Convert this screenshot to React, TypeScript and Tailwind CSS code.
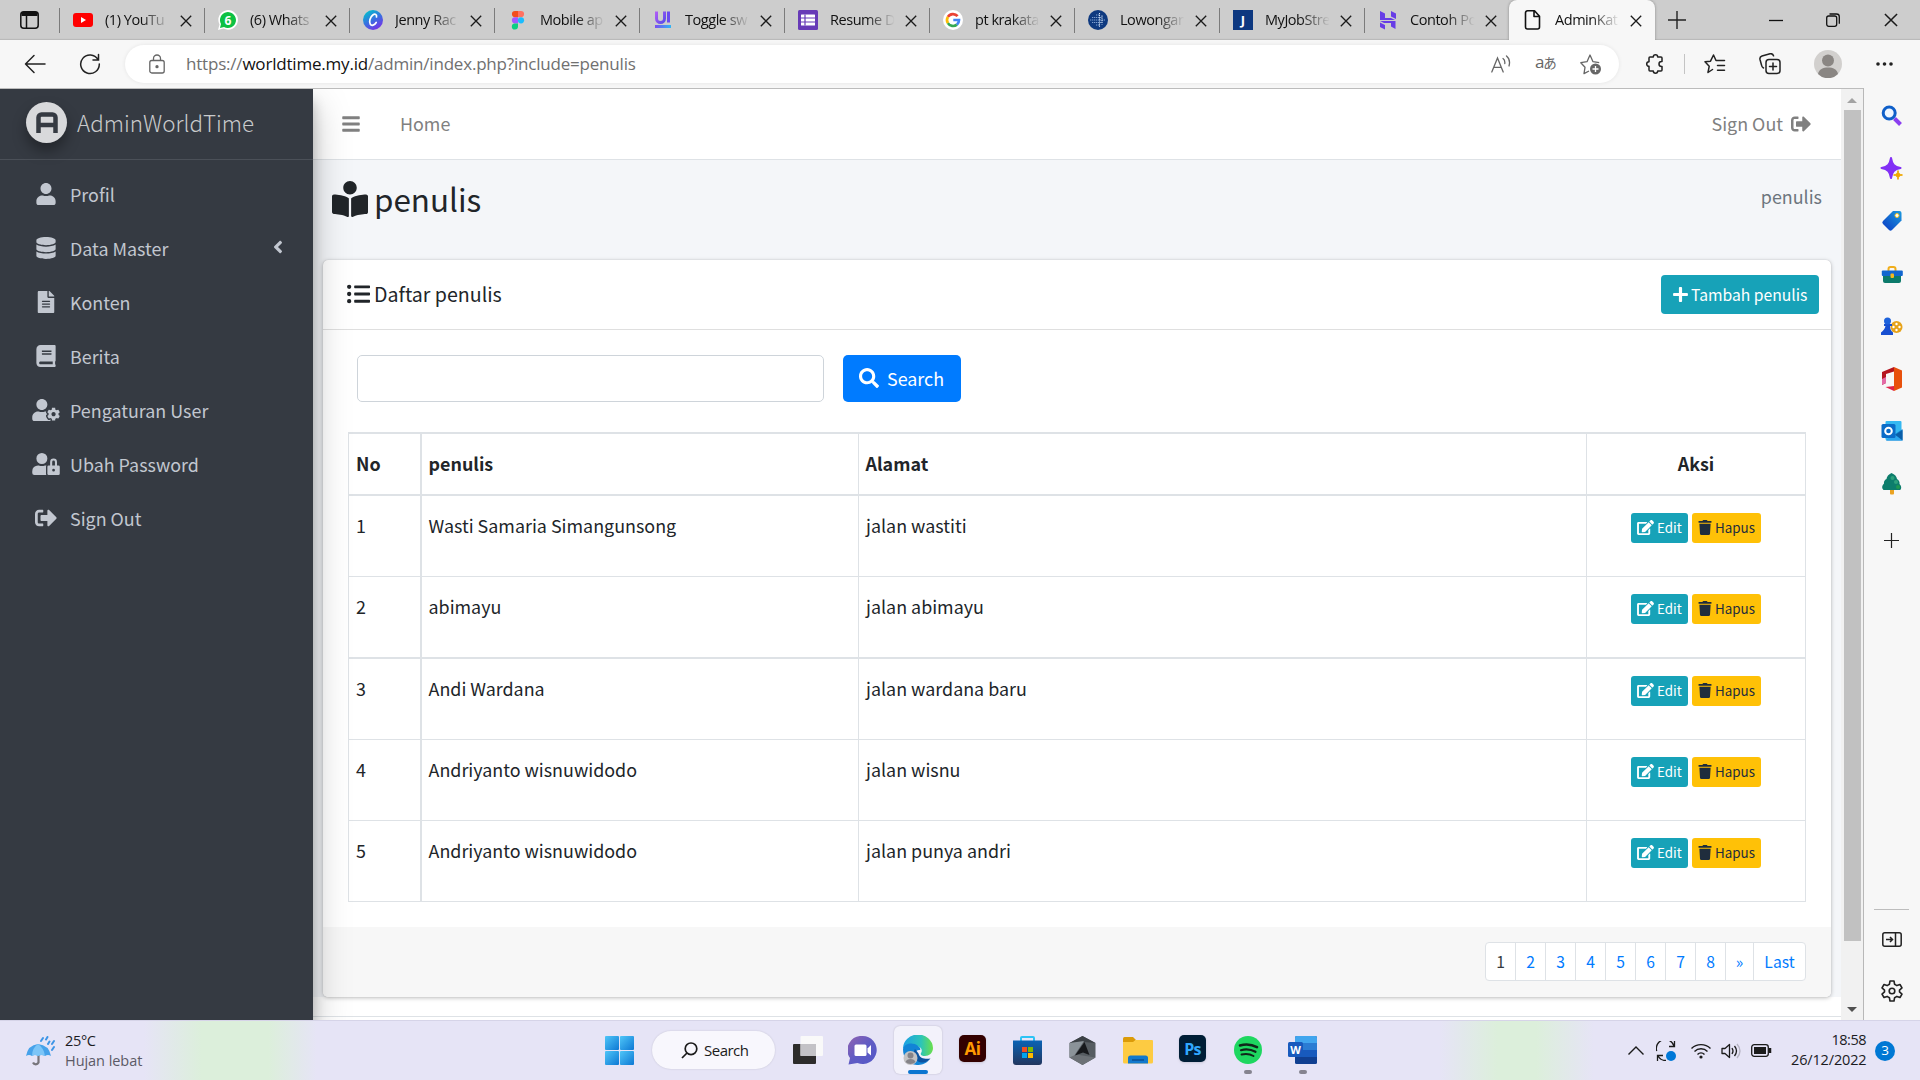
import React from "react";
import {
  FaUser, FaDatabase, FaFileAlt, FaBook, FaUserCog, FaUserLock, FaSignOutAlt, FaAngleLeft,
  FaBookReader, FaListUl, FaPlus, FaSearch, FaEdit, FaTrash, FaBars,
} from "react-icons/fa";

const segoe = "font-['Open_Sans',sans-serif]";
const source = "font-['Noto_Sans_CJK_SC',sans-serif]";

/* ---------- favicons ---------- */
const YouTube = () => (
  <svg viewBox="0 0 20 20" className="size-5"><rect y="3" width="20" height="14" rx="3" fill="#f00" /><path d="M8 7v6l5-3z" fill="#fff" /></svg>
);
const WhatsApp = () => (
  <svg viewBox="0 0 20 20" className="size-5">
    <path d="M0 20l1.5-5.5A9.8 9.8 0 1 1 5.500 18.500z" fill="#fff" />
    <path d="M2 18l1-4a8 8 0 1 1 3 3z" fill="#0dc143" />
    <text x="10" y="14.500" textAnchor="middle" fontSize="12" fontWeight="700" fill="#fff" fontFamily="Open Sans">6</text>
  </svg>
);
const Canva = () => (
  <svg viewBox="0 0 20 20" className="size-5">
    <defs><linearGradient id="canva" x1="0.200" y1="0" x2="0.800" y2="1"><stop offset="0" stopColor="#00c4cc" /><stop offset=".5" stopColor="#3a6fe0" /><stop offset="1" stopColor="#7d2ae8" /></linearGradient></defs>
    <circle cx="10" cy="10" r="10" fill="url(#canva)" />
    <path d="M13.500 7c.6-2.600-1.500-3.600-3.700-2C7 7 5.800 12 7.300 14.300c1.200 1.800 4.200 1 5.900-1.800" fill="none" stroke="#fff" strokeWidth="1.700" strokeLinecap="round" />
  </svg>
);
const Figma = () => (
  <svg viewBox="0 0 20 20" className="size-5">
    <path d="M10 1H7a3.100 3.100 0 0 0 0 6.200h3z" fill="#f24e1e" /><path d="M10 1h3a3.100 3.100 0 0 1 0 6.200h-3z" fill="#ff7262" />
    <path d="M10 7.200H7a3.100 3.100 0 0 0 0 6.200h3z" fill="#a259ff" /><circle cx="13" cy="10.300" r="3.100" fill="#1abcfe" />
    <path d="M10 13.400H7a3.100 3.100 0 1 0 3 3.200z" fill="#0acf83" />
  </svg>
);
const Uiverse = () => (
  <svg viewBox="0 0 20 20" className="size-5">
    <defs><linearGradient id="uiv" x1="0" x2="1" y1="0" y2="1"><stop offset="0" stopColor="#b05cf5" /><stop offset="1" stopColor="#5b4bea" /></linearGradient>
      <linearGradient id="uiv2"><stop offset="0" stopColor="#7b4df0" /><stop offset="1" stopColor="#2fb6f5" /></linearGradient></defs>
    <path d="M3.500 1.500v7a4 4 0 0 0 8 0v-7" fill="none" stroke="url(#uiv)" strokeWidth="3" />
    <rect x="14" y="1.500" width="3" height="11" fill="#6a4af0" /><rect x="2" y="15" width="16" height="3" fill="url(#uiv2)" />
  </svg>
);
const Forms = () => (
  <svg viewBox="0 0 20 20" className="size-5"><rect width="20" height="20" rx="1.500" fill="#673ab7" /><rect x="3" y="4.500" width="14" height="11" rx=".5" fill="#fff" />
    <path d="M3 8h14M3 12h14M7 4.500v11" stroke="#673ab7" strokeWidth="1.200" /></svg>
);
const Google = () => (
  <svg viewBox="0 0 20 20" className="size-5"><circle cx="10" cy="10" r="10" fill="#fff" />
    <g fill="none" strokeWidth="2.700">
      <path d="M14.600 6.200A6 6 0 0 0 4.900 6.900" stroke="#ea4335" /><path d="M4.900 6.900a6 6 0 0 0 0 6.200" stroke="#fbbc05" />
      <path d="M4.900 13.100a6 6 0 0 0 9 1.500" stroke="#34a853" /><path d="M13.900 14.600A6 6 0 0 0 16 10h-5.700" stroke="#4285f4" />
    </g></svg>
);
const Dots = () => (
  <svg viewBox="0 0 20 20" className="size-5"><circle cx="10" cy="10" r="10" fill="#0f3a80" />
    <path d="M2 10h15M4 7.500h10M4 12.500h10M8 5h4M8 15h4" stroke="#7f9fd0" strokeWidth="1.100" strokeDasharray="1.300 .7" />
    <path d="M11.500 3v14M14 5.500v9" stroke="#dbe8fa" strokeWidth="1.100" strokeDasharray="1.200 .9" /></svg>
);
const JobStreet = () => (
  <svg viewBox="0 0 20 20" className="size-5"><rect width="20" height="20" fill="#0d3880" />
    <text x="10" y="15" textAnchor="middle" fontSize="13" fontWeight="700" fill="#fff" fontFamily="Open Sans">J</text></svg>
);
const Hostinger = () => (
  <svg viewBox="0 0 20 20" className="size-5" fill="#673de6"><path d="M2 1l5 2.500V8h6l4 2H2zM13 1l5 2.500V9l-5-2.500zM2 11h15.500v8L13 16.500V13H6L2 11zM2 12.500L7 15v4.500L2 17z" /></svg>
);
const Doc = () => (
  <svg viewBox="0 0 20 20" className="size-5" fill="none" stroke="#111" strokeWidth="1.600" strokeLinejoin="round"><path d="M4.500.8h7l5 5.500V17a2 2 0 0 1-2 2h-10a2 2 0 0 1-2-2V2.800a2 2 0 0 1 2-2zM11 1v5.500h5.200" /></svg>
);

const tabs: [React.FC, string][] = [
  [YouTube, "(1) YouTu"], [WhatsApp, "(6) Whats"], [Canva, "Jenny Rac"], [Figma, "Mobile ap"],
  [Uiverse, "Toggle sw"], [Forms, "Resume D"], [Google, "pt krakata"], [Dots, "Lowongar"],
  [JobStreet, "MyJobStre"], [Hostinger, "Contoh Po"],
];

const Cross = ({ c = "size-3" }: { c?: string }) => (
  <svg viewBox="0 0 12 12" className={c + " shrink-0"} stroke="#1a1a1a" strokeWidth="1.300"><path d="M.8.8l10.400 10.400M11.200.8L.8 11.200" /></svg>
);

function Tab({ Icon, label, active }: { Icon: React.FC; label: string; active?: boolean }) {
  return (
    <div className={active ? "flex h-10 w-[146px] shrink-0 items-center rounded-t-lg bg-[#f7f7f7] pl-[14px] shadow-[0_0_3px_rgba(0,0,0,0.35)]" : "flex h-10 w-[145px] shrink-0 items-center"}>
      {!active && <div className="mr-[13px] h-[25px] w-px bg-[#7b7b7b]" />}
      <Icon />
      <span className="ml-3 w-[66px] overflow-hidden text-[14.500px] tracking-[-0.450px] whitespace-nowrap text-[#111] [mask-image:linear-gradient(90deg,#000_55%,transparent_98%)]">{label}</span>
      <span className="ml-[9px] pt-px"><Cross /></span>
    </div>
  );
}

function TabStrip() {
  return (
    <div className="flex h-10 items-center overflow-hidden bg-[#cdcdcd] shadow-[inset_0_-2px_1px_-1px_#b9b9b9]">
      <div className="flex w-[59px] shrink-0 pl-[20px]">
        <svg viewBox="0 0 19 18" className="h-[18px] w-[19px]" fill="none" stroke="#111" strokeWidth="1.500"><rect x=".8" y=".8" width="17.400" height="16.400" rx="3" /><path d="M1.500 3h16" strokeWidth="4" /><path d="M6.500 5v12" /></svg>
      </div>
      {tabs.map(([Icon, label]) => <Tab key={label} Icon={Icon} label={label} />)}
      <Tab Icon={Doc} label="AdminKat" active />
      <svg viewBox="0 0 18 18" className="ml-[13px] size-[18px] shrink-0" stroke="#222" strokeWidth="1.400"><path d="M9 0v18M0 9h18" /></svg>
      <svg viewBox="0 0 14 14" className="ml-[83px] size-[14px] shrink-0" stroke="#111" strokeWidth="1.300"><path d="M0 7.500h14" /></svg>
      <svg viewBox="0 0 14 14" className="ml-[43px] size-[14px] shrink-0" fill="none" stroke="#111" strokeWidth="1.300"><rect x=".7" y="3" width="10" height="10.300" rx="2" /><path d="M3.500 1h7A2.800 2.800 0 0 1 13.300 3.800v7" /></svg>
      <span className="ml-[44px]"><Cross c="size-[14px]" /></span>
    </div>
  );
}

function Toolbar() {
  return (
    <div className="flex h-12 items-center bg-[#f7f7f7]">
      <svg viewBox="0 0 22 20" className="ml-6 h-5 w-[22px]" fill="none" stroke="#222" strokeWidth="1.500" strokeLinecap="round" strokeLinejoin="round"><path d="M21 10H1.500M10 1.500L1.500 10l8.500 8.500" /></svg>
      <svg viewBox="0 0 22 22" className="ml-[33px] size-[22px]" fill="none" stroke="#222" strokeWidth="1.500" strokeLinecap="round"><path d="M19 6.500A9.300 9.300 0 1 0 20.300 11M19.500 1.500v5.500h-5.500" /></svg>
      <div className="ml-6 flex h-[38px] w-[1494px] items-center rounded-full bg-white shadow-[0_0_4px_rgba(0,0,0,0.08)]">
        <svg viewBox="0 0 16 20" className="ml-6 h-5 w-4" fill="none" stroke="#666" strokeWidth="1.300"><rect x=".8" y="6.500" width="14.400" height="12.500" rx="2" /><path d="M4.500 6.500V4.500a3.500 3.500 0 0 1 7 0v2" /><circle cx="8" cy="12.700" r="1" fill="#666" /></svg>
        <span className="ml-[21px] w-[1305px] text-[17px] tracking-[-0.200px] whitespace-nowrap text-[#707070]">https://<span className="text-[#111]">worldtime.my.id</span>/admin/index.php?include=penulis</span>
        <svg viewBox="0 0 20 19" className="h-[19px] w-5 shrink-0" fill="none" stroke="#666" strokeWidth="1.300" strokeLinecap="round"><path d="M.8 17L6.500 3 12.200 17M2.800 12.300h7.400M12 3.500c1.500 1 2 3 1.800 5M15.500 1c3 2.500 3.500 6.500 2.500 10" /></svg>
        <span className="ml-[24px] w-[22px] shrink-0 pb-1 text-[17px] leading-5 tracking-[-1.200px] whitespace-nowrap text-[#666]">a<span className="font-['Noto_Sans_CJK_JP',sans-serif] text-[13.500px]">あ</span></span>
        <svg viewBox="0 0 22 22" className="ml-[23px] size-[22px] shrink-0 overflow-visible" fill="none" stroke="#666" strokeWidth="1.300" strokeLinejoin="round"><path d="M9 18l-5 2.600 1-6.300L.8 9.700l6.200-1L10 2l3 6.700 6.200 1" /><circle cx="15.500" cy="16" r="5.500" fill="#666" stroke="none" /><path d="M15.500 13v6M12.500 16h6" stroke="#fff" /></svg>
      </div>
      <svg viewBox="0 0 20 20" className="ml-[26px] size-5" fill="none" stroke="#222" strokeWidth="1.500" strokeLinejoin="round"><path d="M6 3h2.300a2.200 2.200 0 0 1 4.400 0H16a1 1 0 0 1 1 1v3.500h-.5a2.500 2.500 0 0 0 0 5H17V16a1 1 0 0 1-1 1h-3.300a2.200 2.200 0 0 1-4.400 0H5a1 1 0 0 1-1-1v-3.700a2.300 2.300 0 0 1 0-4.600V4a1 1 0 0 1 1-1z" /></svg>
      <div className="ml-[19px] h-5 w-px bg-[#c4c4c4]" />
      <svg viewBox="0 0 22 20" className="ml-[19px] h-5 w-[22px]" fill="none" stroke="#222" strokeWidth="1.500" strokeLinejoin="round" strokeLinecap="round"><path d="M8.500 15.500L4 18.500l1.200-6.200L1 7.800l5.500-.6L9.500 1l2.500 5.500h8.500M13.500 11.500h7M13.500 16.200h7" /></svg>
      <svg viewBox="0 0 22 22" className="ml-[33px] size-[22px]" fill="none" stroke="#222" strokeWidth="1.500" strokeLinecap="round"><rect x="7" y="6.500" width="14" height="14" rx="3" /><path d="M14 10v7M10.500 13.500h7M4.500 15A4 4 0 0 1 2.500 12L1 6.500a3 3 0 0 1 2-3.500l8-2.200a3 3 0 0 1 3.500 2" /></svg>
      <svg viewBox="0 0 28 28" className="ml-[33px] size-7"><circle cx="14" cy="14" r="14" fill="#d2d0ce" /><circle cx="14" cy="10.500" r="6" fill="#8a8683" /><path d="M4 24c1-5 5-6.500 10-6.500S23 19 24 24a14 14 0 0 1-20 0z" fill="#8a8683" /></svg>
      <svg viewBox="0 0 17 4" className="ml-[34px] h-1 w-[17px]" fill="#222"><circle cx="2" cy="2" r="1.800" /><circle cx="8.500" cy="2" r="1.800" /><circle cx="15" cy="2" r="1.800" /></svg>
    </div>
  );
}

/* ---------- admin side menu ---------- */
const menu = [
  { Icon: FaUser, label: "Profil" }, { Icon: FaDatabase, label: "Data Master", open: true },
  { Icon: FaFileAlt, label: "Konten" }, { Icon: FaBook, label: "Berita" },
  { Icon: FaUserCog, label: "Pengaturan User" }, { Icon: FaUserLock, label: "Ubah Password" },
  { Icon: FaSignOutAlt, label: "Sign Out" },
];

function AdminMenu() {
  return (
    <aside className="z-10 h-[931px] w-[313px] shrink-0 bg-[#353a42] text-[#c2c7d0] shadow-[0_17px_35px_rgba(0,0,0,0.25),0_12px_12px_rgba(0,0,0,0.22)]">
      <div className="flex h-[71px] items-center border-b border-[#4b5058] pb-[3px] pl-[26px]">
        <div className="flex size-[41px] items-center justify-center rounded-full bg-[#d8d9db] shadow-[0_8px_14px_rgba(0,0,0,0.35)]">
          <svg viewBox="0 0 22 21" className="h-[21px] w-[22px]" fill="none" stroke="#353a42" strokeWidth="4.500"><path d="M2.500 21V5.500a3 3 0 0 1 3-3h11a3 3 0 0 1 3 3V21M3 13h16" /></svg>
        </div>
        <span className="mb-[2px] ml-[10px] text-[22.400px] leading-8 font-light text-[#c9cacc]">AdminWorldTime</span>
      </div>
      <nav className="pt-[7px]">
        {menu.map(({ Icon, label, open }) => (
          <div key={label} className="flex h-[54px] items-center pl-8">
            <Icon className="h-[22px] w-7" />
            <span className="ml-[10px] w-[200px] text-[17.900px] leading-6">{label}</span>
            {open && <FaAngleLeft className="mb-[2px] ml-px h-5 w-3.5" />}
          </div>
        ))}
      </nav>
    </aside>
  );
}

/* ---------- page ---------- */
const rows = [
  ["1", "Wasti Samaria Simangunsong", "jalan wastiti"], ["2", "abimayu", "jalan abimayu"],
  ["3", "Andi Wardana", "jalan wardana baru"], ["4", "Andriyanto wisnuwidodo", "jalan wisnu"],
  ["5", "Andriyanto wisnuwidodo", "jalan punya andri"],
];
const line = "border-[#dee2e6]";

function Table() {
  const cols = "grid grid-cols-[73px_437px_728px_218px]";
  return (
    <div className={`ml-[25px] w-[1458px] border-x border-t-2 ${line} text-[17.900px] leading-[27px]`}>
      <div className={`${cols} h-[62px] border-b-2 ${line} font-bold`}>
        <div className={`border-r-2 ${line} pt-4 pl-[7px]`}>No</div>
        <div className={`border-r ${line} pt-4 pl-[6.500px]`}>penulis</div>
        <div className={`border-r ${line} pt-4 pl-[6.500px]`}>Alamat</div>
        <div className="pt-4 text-center">Aksi</div>
      </div>
      {rows.map((r, i) => (
        <div key={r[0]} className={`${cols} ${line} ${i === 1 ? "h-[82px] border-b-2" : "h-[81px] border-b"}`}>
          <div className={`border-r-2 ${line} pt-4 pl-[7px]`}>{r[0]}</div>
          <div className={`border-r ${line} pt-4 pl-[6.500px]`}>{r[1]}</div>
          <div className={`border-r ${line} pt-4 pl-[7px]`}>{r[2]}</div>
          <div className="flex justify-center gap-1 pt-[17px] text-[13.400px] leading-[28px]">
            <span className="flex h-[30px] w-[57px] items-center rounded-[3px] bg-[#17a2b8] pb-[2px] pl-1.5 text-white"><FaEdit className="mr-[3px] h-[15px] w-[17px]" />Edit</span>
            <span className="flex h-[30px] w-[69px] items-center rounded-[3px] bg-[#ffc107] pb-[2px] pl-1.5 text-[#1f2d3d]"><FaTrash className="mr-[3px] h-[15px] w-3.5" />Hapus</span>
          </div>
        </div>
      ))}
    </div>
  );
}

function Pagination() {
  return (
    <div className={`flex h-[39px] rounded-[4px] border ${line} bg-white text-[15.700px] leading-[38px] text-[#007bff]`}>
      {["1", "2", "3", "4", "5", "6", "7", "8"].map((p) => (
        <span key={p} className={`w-[30px] border-r ${line} text-center ${p === "1" ? "text-[#343a40]" : ""}`}>{p}</span>
      ))}
      <span className={`w-7 border-r ${line} text-center`}>»</span>
      <span className="w-[51px] text-center">Last</span>
    </div>
  );
}

function Main() {
  return (
    <main className="flex h-[931px] w-[1528px] shrink-0 flex-col bg-[#f4f6f9] text-[#212529]">
      <div className="flex h-[71px] shrink-0 items-center border-b border-[#dee2e6] bg-white text-[17.900px] text-[#808080]">
        <FaBars className="ml-[29px] h-5 w-[18px]" />
        <span className="mb-[2px] ml-10 leading-6">Home</span>
        <span className="mb-[2px] ml-auto leading-6">Sign Out</span>
        <FaSignOutAlt className="mr-[30px] mb-px ml-2 size-5" />
      </div>
      <div className="flex h-[100px] shrink-0 pl-[19px]">
        <FaBookReader className="mt-[21px] size-9" />
        <h1 className="mt-[15px] ml-[6px] text-[31.400px] leading-[48px]">penulis</h1>
        <span className="mt-6 mr-[19px] ml-auto text-[17.900px] leading-6 text-[#6c757d]">penulis</span>
      </div>
      <section className="relative ml-[10px] flex h-[737px] w-[1508px] shrink-0 flex-col overflow-hidden rounded-[5px] bg-white shadow-[0_0_1px_rgba(0,0,0,0.2),0_1px_4px_rgba(0,0,0,0.25)]">
        <div className="flex h-[70px] shrink-0 items-center border-b border-[#dfdfdf] pl-6">
          <FaListUl className="mb-[2px] h-6 w-[23px]" />
          <span className="mb-[2px] ml-1 text-[19.600px] leading-7">Daftar penulis</span>
          <span className="mr-3 ml-auto flex h-[39px] w-[158px] items-center rounded-[4px] bg-[#17a2b8] pl-[11px] text-[15.700px] leading-6 text-white"><FaPlus className="mr-[2px] mb-px size-[17px]" />Tambah penulis</span>
        </div>
        <div className="flex h-[102px] shrink-0 pt-[25px] pl-[34px]">
          <input aria-label="Search penulis" className="h-[47px] w-[467px] rounded-[5px] border border-[#ced4da] bg-white outline-none" />
          <button className="ml-[19px] flex h-[47px] w-[118px] items-center rounded-[5px] bg-[#007bff] pl-4 text-[17.900px] text-white"><FaSearch className="mr-2 mb-px size-5" />Search</button>
        </div>
        <Table />
        <div className="mt-auto flex h-[70px] shrink-0 justify-end bg-[#f7f7f7] pt-[15px] pr-[25px]"><Pagination /></div>
      </section>
      <div className="h-5 shrink-0 border-b border-[#dee2e6] bg-white" />
      <div className="h-[3px] shrink-0 bg-white" />
    </main>
  );
}

/* ---------- browser side bar ---------- */
function EdgeBar() {
  const slot = "size-[22px] overflow-visible";
  return (
    <div className="flex w-[57px] shrink-0 flex-col items-center border-l border-[#b8b8b8] bg-[#f7f7f7] pt-[17px] pr-px">
      <svg viewBox="0 0 22 22" className={slot} fill="none"><path d="M13.500 13.500l6 6" stroke="#8b3ff0" strokeWidth="4" /><circle cx="8.200" cy="8" r="6" stroke="#0f5fc9" strokeWidth="3" fill="#eef6ff" /></svg>
      <svg viewBox="0 0 22 22" className={`mt-[31px] ${slot}`}><path d="M10 0c1 6 3 9 9.500 10C13 11 11 14 10 20 9 14 7 11 .5 10 7 9 9 6 10 0z" fill="#8230f5" stroke="#8230f5" strokeWidth="2" strokeLinejoin="round" /><path d="M17 12.500c.5 3 1.500 4 4.500 4.500-3 .5-4 1.500-4.500 4.500-.5-3-1.500-4-4.500-4.500 3-.5 4-1.500 4.500-4.500z" fill="#f0a800" stroke="#f0a800" strokeLinejoin="round" /></svg>
      <svg viewBox="0 0 22 22" className={`mt-[30px] ${slot}`}><defs><linearGradient id="tag" x1="1" y1="0" x2="0" y2="1"><stop offset="0" stopColor="#1c9ade" /><stop offset="1" stopColor="#0a39c4" /></linearGradient></defs><path d="M12 1h6.500a2 2 0 0 1 2 2V10.500L11 20q-1.500 1.500-3 0L2 14q-1.500-1.500 0-3z" fill="url(#tag)" /><circle cx="16" cy="5.500" r="2" fill="#fff" stroke="#f5c21b" /></svg>
      <svg viewBox="0 0 22 22" className={`mt-[32px] ${slot}`}><path d="M7.500 8V5q0-2 2-2h3q2 0 2 2v3" fill="none" stroke="#f0ae1c" strokeWidth="2" /><path d="M2 10h18v7q0 2-2 2H4q-2 0-2-2z" fill="#0c7a6b" /><rect x=".8" y="6.500" width="21" height="5.500" rx="1" fill="#1266cf" /><rect x="9.500" y="9.500" width="3.500" height="4.500" rx="1" fill="#f5b91e" /></svg>
      <svg viewBox="0 0 22 22" className={`mt-[30px] ${slot}`}><circle cx="15.500" cy="11" r="6" fill="#e7a31a" /><g fill="#fff"><circle cx="15.500" cy="8" r="1.200" /><circle cx="15.500" cy="14" r="1.200" /><circle cx="12.500" cy="11" r="1.200" /><circle cx="18.500" cy="11" r="1.200" /></g><path d="M3 8h8v2H9c0 3 1 5 3 6.500V19H0v-2.500C2 15 4 13 4.500 10H3z" fill="#174fd1" /><circle cx="6.500" cy="5" r="3.500" fill="#1d62dc" /></svg>
      <svg viewBox="0 0 22 24" className="mt-[29px] h-6 w-[22px]"><path d="M13 0l8 3.500v17L13 24z" fill="#e8500c" /><path d="M13 0L1 5v13l4-2V7l8-2.500z" fill="#b5151f" /><path d="M1 12v6l4-2v-6z" fill="#e36aa6" /><path d="M4.500 20L13 24v-5z" fill="#e0224a" /></svg>
      <svg viewBox="0 0 22 22" className={`mt-[29px] ${slot}`}><rect x="4.500" y="1" width="16" height="19" rx="1" fill="#35b8f1" /><path d="M5 20.500h16.500V9z" fill="#1280d0" /><path d="M21.500 20.500V10L14 15z" fill="#0a5ea8" /><path d="M5 20.500h16.500L13 14z" fill="#2ba6ee" /><rect x=".5" y="4" width="14" height="14" rx="1.500" fill="#0a6cc8" /><circle cx="7.500" cy="11" r="3.300" fill="none" stroke="#fff" strokeWidth="2" /></svg>
      <svg viewBox="0 0 22 22" className={`mt-[31px] ${slot}`}><rect x="9" y="16" width="4" height="5.500" rx="1" fill="#eba321" /><path d="M10.500 0q5 2 5.500 6 3 2 2.500 5 3 3 .8 6H2.500q-3-3 .5-6.500-.5-3 2.500-4.500Q6 2 10.500 0z" fill="#0d7d6c" /><circle cx="15" cy="9" r="2" fill="#2da17c" /><circle cx="11.500" cy="5" r="2" fill="#2da17c" /><circle cx="17" cy="14" r="2" fill="#1f9950" /></svg>
      <svg viewBox="0 0 15 15" className="mt-[38px] size-[15px]" stroke="#222" strokeWidth="1.200"><path d="M7.500 0v15M0 7.500h15" /></svg>
      <div className="mt-auto h-px w-[35px] bg-[#bdbdbd]" />
      <svg viewBox="0 0 20 15" className="mt-[22px] h-[15px] w-5" fill="none" stroke="#222" strokeWidth="1.500"><rect x=".8" y=".8" width="18.400" height="13.400" rx="2" /><path d="M13.500 1v13M4 7.500h6.500M8 5l2.500 2.500L8 10" /></svg>
      <svg viewBox="0 0 24 24" className="mt-[32px] mb-[17px] size-[24px]" fill="none" stroke="#222" strokeWidth="1.600" strokeLinejoin="round"><circle cx="12" cy="12" r="2.800" /><path d="M10 2h4l.6 3.300 2.300 1.300 3.100-1.100 2 3.400-2.500 2.200v1.800l2.500 2.200-2 3.400-3.100-1.100-2.300 1.300L14 22h-4l-.6-3.300-2.300-1.300L4 18.500l-2-3.400 2.500-2.200v-1.800L2 8.900l2-3.400 3.100 1.100 2.300-1.300z" /></svg>
    </div>
  );
}

/* ---------- taskbar ---------- */
const Slot = ({ children, dot }: { children: React.ReactNode; dot?: boolean }) => (
  <div className="flex w-[55px] shrink-0 flex-col items-center pt-[15px]">
    {children}
    {dot && <div className="mt-[6px] h-1 w-2 rounded-full bg-[#85838f]" />}
  </div>
);

function Taskbar() {
  return (
    <div className="flex h-[60px] border-t border-[#d6d4e8] bg-[#e6e4f6] bg-[linear-gradient(90deg,transparent_7.500%,#dcefdb_10.500%,#dcefdb_14%,transparent_16.500%,transparent_75%,#dcefdb_78%,#dcefdb_80%,transparent_83%)]">
      <div className="flex w-[592px] shrink-0 pl-[26px]">
        <svg viewBox="0 0 30 30" className="mt-[15px] size-[30px]"><path d="M11 8c0-1.500 1.500-1 1.500 0v15.500a3 3 0 0 1-5.500 0" transform="translate(0 3)" fill="none" stroke="#77757b" strokeWidth="2.200" /><path d="M0 20Q2 9 12 8q11 1 13 12-3-2-6 0-3.500-2-7 0-3-2-6 0-3-2-6 0z" fill="#46a2ea" /><path d="M6 20Q6 12 12 8q6 4 7 12-3.500-2-7 0-3-2-6 0z" fill="#7cc5f7" /><path d="M15 5l2-3M20 3.500l1.500-2.500M22 8l1.500-2.500M26 8l2-3M26 14l2-3" stroke="#3d95e6" strokeWidth="2" strokeLinecap="round" /></svg>
        <div className="mt-[10px] ml-[9px] text-[14.500px] leading-5 tracking-[-0.350px] text-[#1b1b1f]"><div>25°C</div><div className="tracking-[-0.050px] text-[#5b5a66]">Hujan lebat</div></div>
      </div>
      <Slot>
        <svg viewBox="0 0 30 30" className="size-[29px]"><defs><linearGradient id="win" x1="0" y1="0" x2="1" y2="1" ><stop offset="0" stopColor="#4fc6f8" /><stop offset="1" stopColor="#0d78d4" /></linearGradient></defs><g fill="url(#win)"><rect width="14.500" height="14.500" rx="1" /><rect x="15.500" width="14.500" height="14.500" rx="1" /><rect y="15.500" width="14.500" height="14.500" rx="1" /><rect x="15.500" y="15.500" width="14.500" height="14.500" rx="1" /></g></svg>
      </Slot>
      <div className="mt-[10px] mr-[5px] ml-[5px] flex h-[38px] w-[123px] shrink-0 items-center rounded-full bg-[#f8f7fd] pl-[29px] shadow-[0_0_2px_rgba(0,0,0,0.15)]">
        <svg viewBox="0 0 17 17" className="size-[17px]" fill="none" stroke="#1b1b1b" strokeWidth="1.700"><circle cx="10" cy="6.800" r="5.800" /><path d="M6 11l-5 5" /></svg>
        <span className="ml-[6px] text-[15px] tracking-[-0.500px] text-[#1b1b1b]">Search</span>
      </div>
      <Slot><svg viewBox="0 0 30 28" className="h-7 w-[30px]"><rect y="8" width="23" height="20" rx="1" fill="#2d2c2b" /><rect x="7.500" width="22.500" height="20" rx="1" fill="#fbfbfa" opacity=".9" /><rect x="7.500" y="8" width="15.500" height="12" fill="#c3c2c6" /></svg></Slot>
      <Slot><svg viewBox="0 0 29 29" className="size-[29px]"><defs><linearGradient id="chat" x1="0" y1="0" x2="1" y2="1"><stop offset="0" stopColor="#9263b0" /><stop offset=".5" stopColor="#5f5bc4" /><stop offset="1" stopColor="#5358c8" /></linearGradient></defs><path d="M14.500 0a14 14 0 1 1-5 27L.5 28.500 2 22A14 14 0 0 1 14.500 0z" fill="url(#chat)" /><rect x="6.500" y="8.500" width="12" height="11.500" rx="1.500" fill="#fff" /><path d="M19.500 12.500L23 9v10.500l-3.500-3z" fill="#fff" /></svg></Slot>
      <div className="mt-[5px] mr-[3px] ml-[4px] flex h-12 w-12 shrink-0 flex-col items-center rounded-md bg-[#f3f2fb] pt-[9px] shadow-[0_0_2px_rgba(0,0,0,0.2)]">
        <svg viewBox="0 0 30 30" className="size-[30px]"><defs><linearGradient id="edge1"><stop offset="0" stopColor="#1c9fe6" /><stop offset=".6" stopColor="#2cc4b8" /><stop offset="1" stopColor="#6be04a" /></linearGradient></defs>
          <path d="M0 14A15 14 0 0 1 30 13c0 5-4 8-8 8-3 0-5-1-4-3 2-3 0-6-4-7C8 9.500 2 10 0 14z" fill="url(#edge1)" />
          <path d="M0 14c2-6 10-7 15-3 2 1.500 3 3 2 4-5-1-7 6-2 10 3 2 8 2 11 0-3 4-8 5-12 5C5 29 0 23 0 14z" fill="#1284d6" />
          <path d="M12 14c-3 4-1 12 6 13.500 4 .5 7-1 9.500-4-5 1-11 0-12-5z" fill="#0c53a0" />
          <circle cx="7.500" cy="23" r="7" fill="#c4c3c4" /><circle cx="7.500" cy="20.500" r="3" fill="#858388" /><path d="M2.500 27c1-4 9-4 10 0a7 7 0 0 1-10 0z" fill="#858388" /></svg>
        <div className="mt-[5px] h-1 w-5 rounded-full bg-[#0b75d0]" />
      </div>
      <Slot><div className="-mt-px flex size-[27px] items-center justify-center rounded-[5px] bg-[#330000] text-[17px] leading-none font-bold tracking-[-0.500px] text-[#ff9a00] shadow">Ai</div></Slot>
      <Slot><svg viewBox="0 0 29 30" className="h-[30px] w-[29px]"><defs><linearGradient id="store" x1="0" y1="0" x2="0" y2="1"><stop offset="0" stopColor="#0a63b5" /><stop offset="1" stopColor="#22365f" /></linearGradient></defs><path d="M8 6V2q0-1 1-1h11q1 0 1 1v4" fill="none" stroke="#2cc3f5" strokeWidth="2" /><path d="M0 4.500h29V26q0 3-3 3H3q-3 0-3-3z" fill="url(#store)" /><path d="M9 11h5v5H9z" fill="#f25022" /><path d="M15 11h5v5h-5z" fill="#7fba00" /><path d="M9 17h5v5H9z" fill="#00a4ef" /><path d="M15 17h5v5h-5z" fill="#ffb900" /></svg></Slot>
      <Slot><svg viewBox="0 0 27 29" className="h-[29px] w-[27px]"><path d="M13.500 0L26.500 7v14.500L13.500 29 .5 21.500V7z" fill="#565c61" /><path d="M13.500 0L26.500 7 15 6 .5 7z" fill="#3c4146" /><path d="M.5 7L15 5 4 21.500H.5z" fill="#8b9399" /><path d="M13.500 29L.5 21.500 7 18.500l19.500 3z" fill="#6c7176" /><path d="M15.500 6L6 19.500l8-3 6.500 2.500z" fill="#17191c" /></svg></Slot>
      <Slot><svg viewBox="0 0 30 27" className="mt-px h-[27px] w-[30px]"><path d="M0 1.500Q0 0 1.500 0H10l3 3-3 3H0z" fill="#db9b09" /><path d="M0 5h10l2.500-2H29q1 0 1 1v21q0 1.500-1.500 1.500h-27Q0 26.500 0 25z" fill="#fdcb42" /><path d="M5 26.500V21q0-2.500 2.500-2.500h15Q25 18.500 25 21v5.500z" fill="#1279cd" /><path d="M9 23h12" stroke="#0b4f92" strokeWidth="1.500" /></svg></Slot>
      <Slot><div className="-mt-px flex size-[27px] items-center justify-center rounded-[5px] bg-[#001e36] text-[16px] leading-none font-bold tracking-[-0.700px] text-[#31a8ff] shadow">Ps</div></Slot>
      <Slot dot><svg viewBox="0 0 28 28" className="size-[28px]"><circle cx="14" cy="14" r="14" fill="#1ed760" /><g fill="none" stroke="#10261a" strokeLinecap="round"><path d="M6 9.500c6-1.800 12-1 17 1.700" strokeWidth="2.600" /><path d="M7 14.200c5-1.400 10-.8 14.500 1.600" strokeWidth="2.200" /><path d="M7.500 18.500c4.500-1 8.500-.6 12 1.500" strokeWidth="1.900" /></g></svg></Slot>
      <Slot dot><svg viewBox="0 0 29 28" className="h-[28px] w-[29px]"><rect x="7" width="22" height="28" rx="1.500" fill="#103f91" /><path d="M7 14h22v7H7z" fill="#185abd" /><path d="M7 7h22v7H7z" fill="#2b7cd3" /><path d="M7 7V1.500Q7 0 8.500 0h19Q29 0 29 1.500V7z" fill="#41a5ee" /><rect y="6" width="15" height="15" rx="1.500" fill="#185abd" /><text x="7.500" y="17.500" textAnchor="middle" fontSize="11" fontWeight="700" fill="#fff" fontFamily="Open Sans">W</text></svg></Slot>
      <div className="ml-auto flex items-center">
        <svg viewBox="0 0 16 9" className="h-[9px] w-4" fill="none" stroke="#1b1b1b" strokeWidth="1.400"><path d="M.5 8.500L8 1l7.500 7.500" /></svg>
        <svg viewBox="0 0 20 20" className="ml-3 size-5" fill="none" stroke="#1b1b1b" strokeWidth="1.300"><path d="M.7 10A9 9 0 0 1 18 5M18.500 0v5.500H13M1.500 20v-5.500H7M2 15a9 9 0 0 0 8 4.500" /><circle cx="15" cy="15" r="5" fill="#0078d7" stroke="none" /></svg>
        <svg viewBox="0 0 20 16" className="ml-[15px] h-4 w-5" fill="none" stroke="#1b1b1b" strokeWidth="1.400"><path d="M.5 5.500a13.500 13.500 0 0 1 19 0M3.500 8.500a9.200 9.200 0 0 1 13 0M6.500 11.500a5 5 0 0 1 7 0" /><circle cx="10" cy="14" r="1.600" fill="#1b1b1b" stroke="none" /></svg>
        <svg viewBox="0 0 20 16" className="ml-[10px] h-4 w-5" fill="none" stroke="#1b1b1b" strokeWidth="1.300" strokeLinejoin="round"><path d="M1 5.500h3L8.500 1.500v13L4 10.500H1z" /><path d="M11 5q2 3 0 6M13.500 3q4 5 0 10" /><path d="M16 1q6 7 0 14" stroke="#b5b3c2" /></svg>
        <svg viewBox="0 0 21 13" className="ml-[10px] h-[13px] w-[21px]" fill="none" stroke="#1b1b1b" strokeWidth="1.300"><rect x=".7" y=".7" width="16.600" height="11.600" rx="2.500" /><rect x="3" y="3" width="12" height="7" fill="#1b1b1b" stroke="none" /><path d="M19 4v5" strokeWidth="2.500" /></svg>
        <div className="mb-[2px] ml-[19px] w-[75px] text-right text-[14.500px] leading-5 tracking-[-0.150px] whitespace-nowrap text-[#1b1b1f]"><div className="tracking-[-0.500px]">18:58</div><div>26/12/2022</div></div>
        <div className="mr-[25px] ml-[9px] flex size-5 items-center justify-center rounded-full bg-[#0078d4] text-[13.500px] text-white">3</div>
      </div>
    </div>
  );
}

export default function App() {
  return (
    <div className={`h-[1080px] w-[1920px] overflow-hidden bg-white ${segoe}`}>
      <TabStrip />
      <Toolbar />
      <div className="flex h-[932px] overflow-hidden bg-[#f7f7f7]">
        <div className={`flex w-[1863px] shrink-0 overflow-hidden border-t border-[#bcbcbc] ${source}`}>
          <AdminMenu />
          <Main />
          <div className="flex w-[22px] shrink-0 flex-col items-center bg-[#f1f1f1] pt-[9px]">
            <svg viewBox="0 0 10 5" className="h-[5px] w-[10px]" fill="#a3a3a3"><path d="M0 5l5-5 5 5z" /></svg>
            <div className="mt-[7px] h-[831px] w-[17px] bg-[#c1c1c1]" />
            <svg viewBox="0 0 10 5" className="mt-auto mb-2 h-[5px] w-[10px]" fill="#505050"><path d="M0 0l5 5 5-5z" /></svg>
          </div>
        </div>
        <EdgeBar />
      </div>
      <Taskbar />
    </div>
  );
}
